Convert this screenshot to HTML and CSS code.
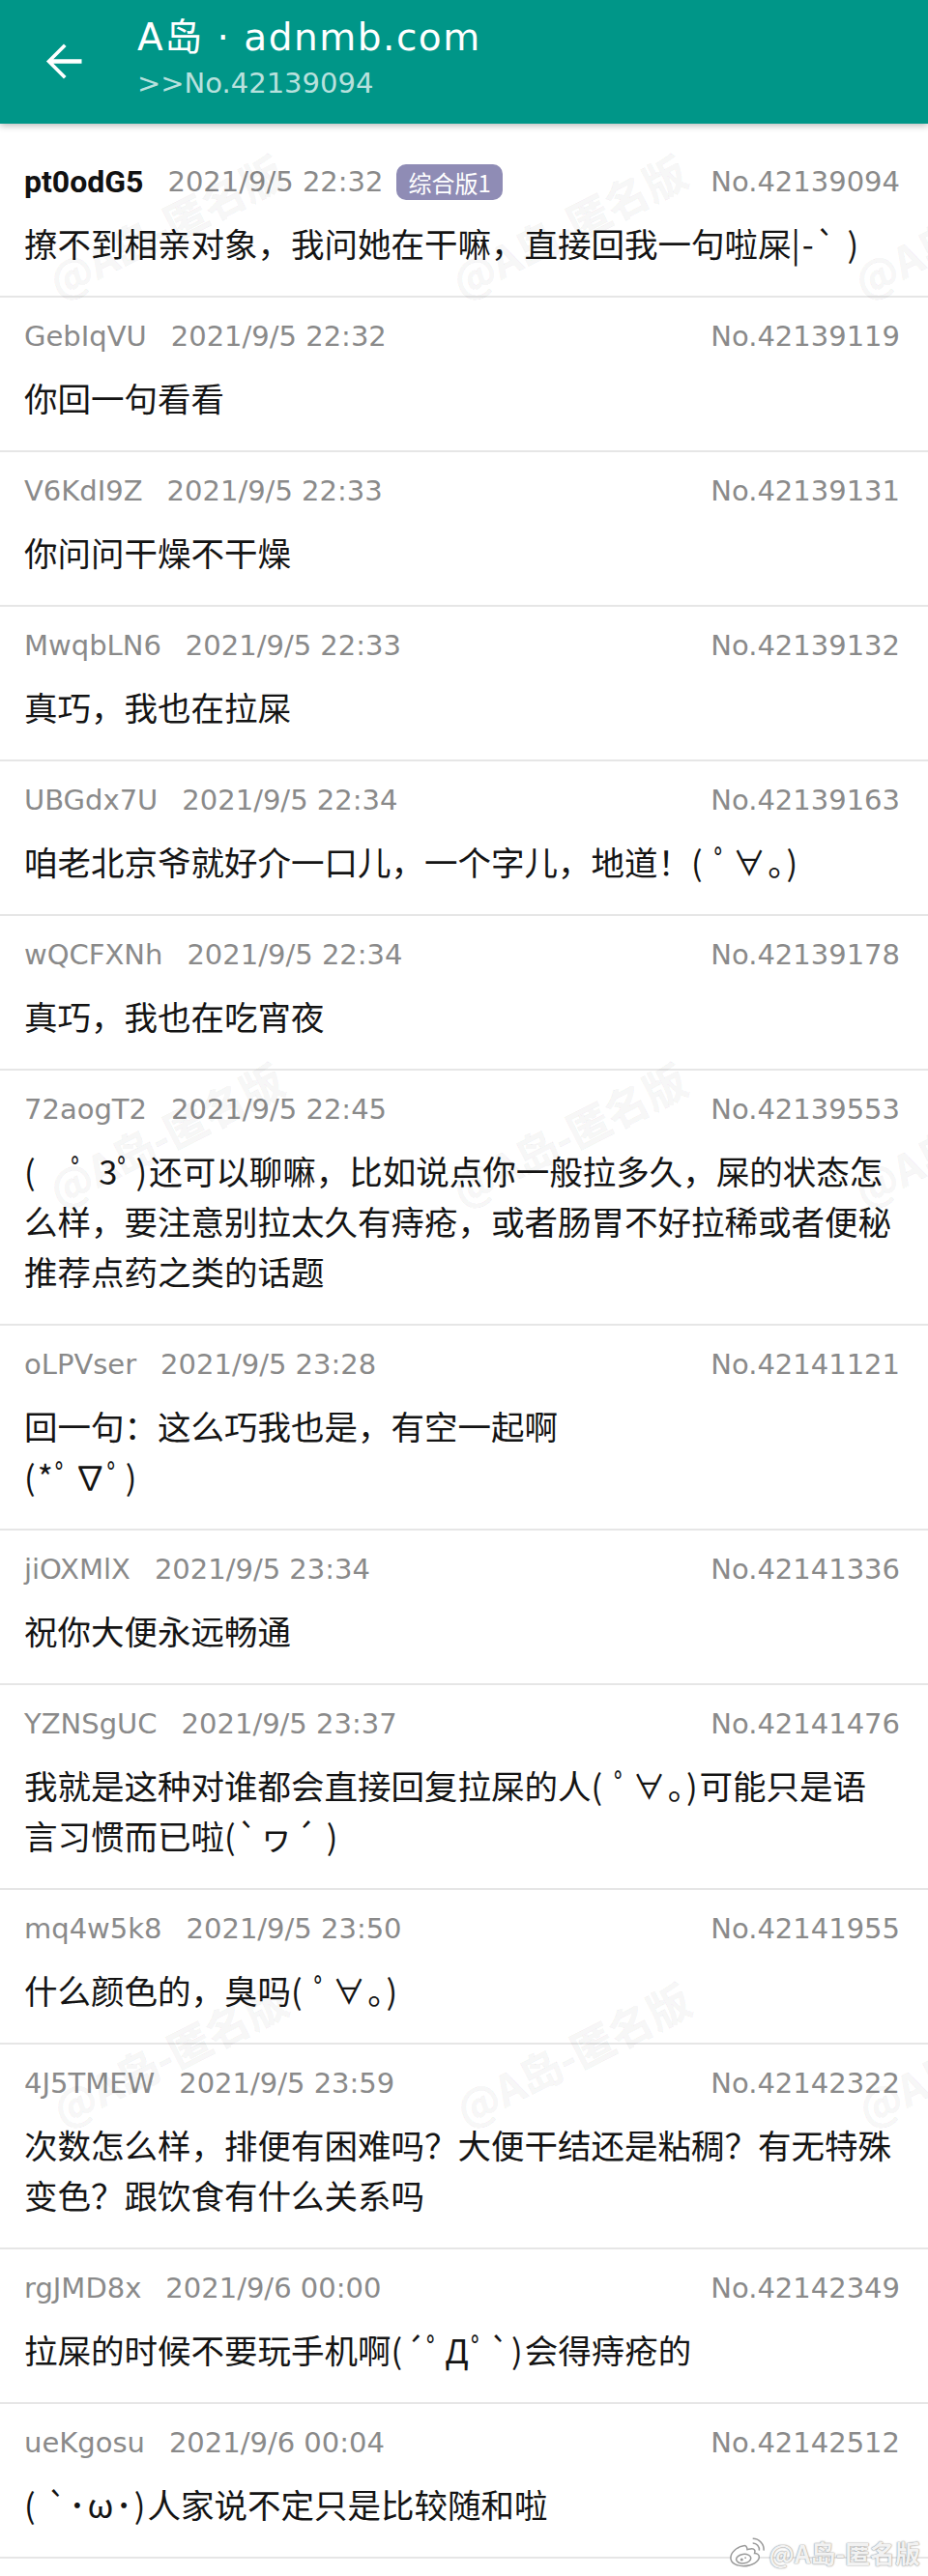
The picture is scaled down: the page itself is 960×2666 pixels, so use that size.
FILE: index.html
```html
<!DOCTYPE html>
<html lang="zh-CN">
<head>
<meta charset="utf-8">
<title>A岛 · adnmb.com</title>
<link rel="stylesheet" href="styles.css">
</head>
<body>
<div class="page">
  <header class="appbar">
    <button class="back" aria-label="返回">
      <svg viewBox="0 0 24 24" width="57" height="57"><path fill="#fff" d="M20 11.1H7.7l5.6-5.6L12.2 4.4 4.6 12l7.6 7.6 1.1-1.1-5.6-5.6H20z"/></svg>
    </button>
    <div class="titles">
      <div class="title">A岛 · adnmb.com</div>
      <div class="subtitle">&gt;&gt;No.42139094</div>
    </div>
  </header>

  <main class="thread">
    <article class="post">
      <div class="meta"><span class="uid op">pt0odG5</span><span class="time">2021/9/5 22:32</span><span class="tag">综合版1</span><span class="no">No.42139094</span></div>
      <p class="content">撩不到相亲对象，我问她在干嘛，直接回我一句啦屎<span class="kao">|-` )</span></p>
    </article>
    <article class="post">
      <div class="meta"><span class="uid">GebIqVU</span><span class="time">2021/9/5 22:32</span><span class="no">No.42139119</span></div>
      <p class="content">你回一句看看</p>
    </article>
    <article class="post">
      <div class="meta"><span class="uid">V6KdI9Z</span><span class="time">2021/9/5 22:33</span><span class="no">No.42139131</span></div>
      <p class="content">你问问干燥不干燥</p>
    </article>
    <article class="post">
      <div class="meta"><span class="uid">MwqbLN6</span><span class="time">2021/9/5 22:33</span><span class="no">No.42139132</span></div>
      <p class="content">真巧，我也在拉屎</p>
    </article>
    <article class="post">
      <div class="meta"><span class="uid">UBGdx7U</span><span class="time">2021/9/5 22:34</span><span class="no">No.42139163</span></div>
      <p class="content">咱老北京爷就好介一口儿，一个字儿，地道！<span class="kao">( ﾟ∀。)</span></p>
    </article>
    <article class="post">
      <div class="meta"><span class="uid">wQCFXNh</span><span class="time">2021/9/5 22:34</span><span class="no">No.42139178</span></div>
      <p class="content">真巧，我也在吃宵夜</p>
    </article>
    <article class="post">
      <div class="meta"><span class="uid">72aogT2</span><span class="time">2021/9/5 22:45</span><span class="no">No.42139553</span></div>
      <p class="content"><span class="kao">(　ﾟ 3ﾟ)</span>还可以聊嘛，比如说点你一般拉多久，屎的状态怎么样，要注意别拉太久有痔疮，或者肠胃不好拉稀或者便秘推荐点药之类的话题</p>
    </article>
    <article class="post">
      <div class="meta"><span class="uid">oLPVser</span><span class="time">2021/9/5 23:28</span><span class="no">No.42141121</span></div>
      <p class="content">回一句：这么巧我也是，有空一起啊<br><span class="kao">(*ﾟ∇ﾟ)</span></p>
    </article>
    <article class="post">
      <div class="meta"><span class="uid">jiOXMlX</span><span class="time">2021/9/5 23:34</span><span class="no">No.42141336</span></div>
      <p class="content">祝你大便永远畅通</p>
    </article>
    <article class="post">
      <div class="meta"><span class="uid">YZNSgUC</span><span class="time">2021/9/5 23:37</span><span class="no">No.42141476</span></div>
      <p class="content">我就是这种对谁都会直接回复拉屎的人<span class="kao">( ﾟ∀。)</span>可能只是语言习惯而已啦<span class="kao">(`ヮ´ )</span></p>
    </article>
    <article class="post">
      <div class="meta"><span class="uid">mq4w5k8</span><span class="time">2021/9/5 23:50</span><span class="no">No.42141955</span></div>
      <p class="content">什么颜色的，臭吗<span class="kao">( ﾟ∀。)</span></p>
    </article>
    <article class="post">
      <div class="meta"><span class="uid">4J5TMEW</span><span class="time">2021/9/5 23:59</span><span class="no">No.42142322</span></div>
      <p class="content">次数怎么样，排便有困难吗？大便干结还是粘稠？有无特殊变色？跟饮食有什么关系吗</p>
    </article>
    <article class="post">
      <div class="meta"><span class="uid">rgJMD8x</span><span class="time">2021/9/6 00:00</span><span class="no">No.42142349</span></div>
      <p class="content">拉屎的时候不要玩手机啊<span class="kao">(´ﾟДﾟ`)</span>会得痔疮的</p>
    </article>
    <article class="post">
      <div class="meta"><span class="uid">ueKgosu</span><span class="time">2021/9/6 00:04</span><span class="no">No.42142512</span></div>
      <p class="content"><span class="kao">( `･ω･)</span>人家说不定只是比较随和啦</p>
    </article>
  </main>

  <div class="wm wm-a1">@A岛-匿名版</div>
  <div class="wm wm-a2">@A岛-匿名版</div>
  <div class="wm wm-a3">@A岛-匿名版</div>
  <div class="wm wm-b1">@A岛-匿名版</div>
  <div class="wm wm-b2">@A岛-匿名版</div>
  <div class="wm wm-b3">@A岛-匿名版</div>
  <div class="wm wm-c1">@A岛-匿名版</div>
  <div class="wm wm-c2">@A岛-匿名版</div>
  <div class="wm wm-c3">@A岛-匿名版</div>

  <div class="weibo-mark">
    <svg class="weibo-logo" viewBox="0 0 40 34" width="38" height="33">
      <g fill="none" stroke="#9a9a9a" stroke-width="1.6">
        <path fill="#fff" d="M16 10c-7 1-14 7-14 13 0 6 7 9 14 9 9 0 17-5 17-10 0-3-3-4-5-4 1-3 0-5-3-5-2 0-4 1-5 1 0-3-2-5-4-4z"/>
        <ellipse cx="16" cy="24" rx="8" ry="5" transform="rotate(-8 16 24)"/>
        <path d="M26 7a7 7 0 0 1 7 8"/>
        <path d="M26 2a12 12 0 0 1 12 13"/>
      </g>
      <circle cx="14" cy="25" r="1.6" fill="#9a9a9a"/>
      <circle cx="18" cy="23" r="0.9" fill="#9a9a9a"/>
    </svg>
    <span class="weibo-text">@A岛-匿名版</span>
  </div>
</div>
</body>
</html>
```

FILE: styles.css
```css
html, body {
  margin: 0;
  padding: 0;
  background: #ffffff;
}

.page {
  position: relative;
  width: 960px;
  min-height: 2666px;
  overflow: hidden;
  background: #ffffff;
  font-family: "DejaVu Sans", "Noto Sans CJK SC", sans-serif;
}

/* App bar */
.appbar {
  position: relative;
  z-index: 2;
  display: flex;
  height: 128px;
  padding-left: 37px;
  background: #009688;
  box-shadow: 0 2px 7px rgba(0, 0, 0, 0.28);
}

.back {
  align-self: flex-start;
  margin-top: 35px;
  width: 57px;
  height: 57px;
  padding: 0;
  border: 0;
  background: none;
}

.back svg {
  display: block;
}

.titles {
  margin-left: 48px;
  padding-top: 15px;
}

.title {
  font-family: "DejaVu Sans", "Noto Sans CJK SC", sans-serif;
  font-size: 39px;
  line-height: 48px;
  letter-spacing: 1.5px;
  color: #ffffff;
  white-space: nowrap;
}

.subtitle {
  margin-top: 5px;
  font-family: "DejaVu Sans", "Noto Sans CJK SC", sans-serif;
  font-size: 29px;
  line-height: 36px;
  color: rgba(255, 255, 255, 0.74);
  white-space: nowrap;
}

/* Thread */
.thread {
  padding-top: 20px;
}

.post {
  padding: 20px 36px 29px 25px;
  border-bottom: 2px solid #e6e6e6;
}

.meta {
  display: flex;
  align-items: center;
  height: 40px;
  line-height: 40px;
  font-family: "DejaVu Sans", "Noto Sans CJK SC", sans-serif;
  font-size: 29px;
  color: #8a8a8a;
  white-space: nowrap;
}

.uid {
  color: #8a8a8a;
}

.uid.op {
  font-family: "Roboto", "DejaVu Sans", sans-serif;
  font-weight: 700;
  font-size: 32px;
  color: #111111;
}

.time {
  margin-left: 25px;
}

.tag {
  display: inline-flex;
  align-items: center;
  height: 37px;
  margin-left: 14px;
  padding: 0 12px;
  border-radius: 10px;
  background: #8f8cb5;
  color: #ffffff;
  font-family: "Noto Sans CJK SC", "DejaVu Sans", sans-serif;
  font-size: 24px;
  line-height: 37px;
}

.no {
  margin-left: auto;
  margin-right: -7px;
}

.content {
  margin: 17px 0 0;
  font-family: "Noto Sans CJK SC", "DejaVu Sans", sans-serif;
  font-size: 34.5px;
  line-height: 52px;
  color: #141414;
}

.kao {
  letter-spacing: 2px;
}

/* Diagonal watermarks */
.wm {
  position: absolute;
  z-index: 3;
  transform: translate(-50%, -50%) rotate(-27deg);
  font-family: "Noto Sans CJK SC", sans-serif;
  font-weight: 700;
  font-size: 44px;
  line-height: 1;
  white-space: nowrap;
  color: rgba(0, 0, 0, 0.035);
  -webkit-text-stroke: 1px rgba(0, 0, 0, 0.045);
  pointer-events: none;
}

.wm-a1 { left: 171px; top: 233px; }
.wm-a2 { left: 588px; top: 233px; }
.wm-a3 { left: 1004px; top: 233px; }
.wm-b1 { left: 171px; top: 1173px; }
.wm-b2 { left: 588px; top: 1173px; }
.wm-b3 { left: 1004px; top: 1173px; }
.wm-c1 { left: 175px; top: 2125px; }
.wm-c2 { left: 592px; top: 2125px; }
.wm-c3 { left: 1008px; top: 2125px; }

/* Weibo corner watermark */
.weibo-mark {
  position: absolute;
  z-index: 3;
  right: 8px;
  bottom: 8px;
  display: flex;
  align-items: center;
  gap: 4px;
}

.weibo-logo {
  display: block;
}

.weibo-text {
  font-family: "Noto Sans CJK SC", sans-serif;
  font-weight: 700;
  font-size: 26px;
  line-height: 32px;
  color: #f2f2f2;
  text-shadow: 0 0 1px #8a8a8a, 0 0 2px rgba(0, 0, 0, 0.35);
}
```
